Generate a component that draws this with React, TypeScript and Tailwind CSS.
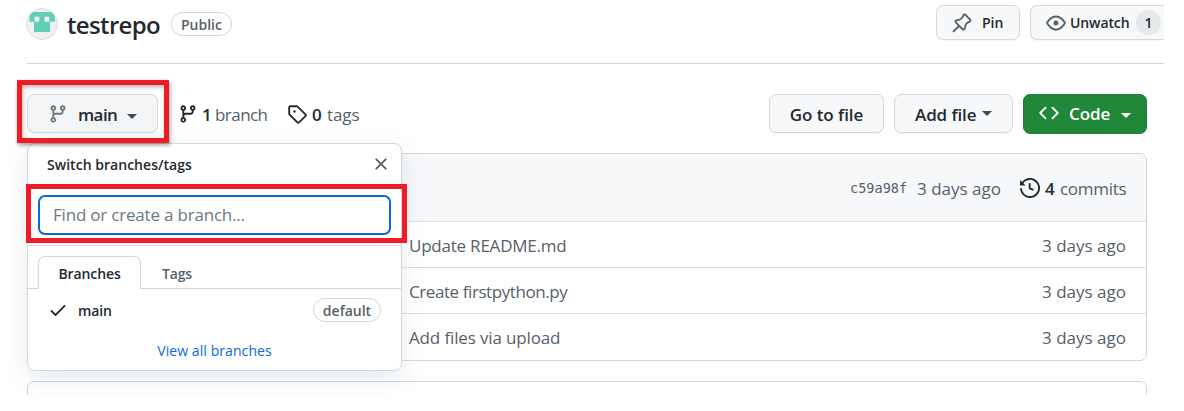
import React from "react";

const paths = {
  branch:
    "M9.5 3.25a2.25 2.25 0 1 1 3 2.122V6A2.5 2.5 0 0 1 10 8.5H6a1 1 0 0 0-1 1v1.128a2.251 2.251 0 1 1-1.5 0V5.372a2.25 2.25 0 1 1 1.5 0v1.836A2.493 2.493 0 0 1 6 7h4a1 1 0 0 0 1-1v-.628A2.25 2.25 0 0 1 9.5 3.25Zm-6 0a.75.75 0 1 0 1.5 0 .75.75 0 0 0-1.5 0Zm8.25-.75a.75.75 0 1 0 0 1.5.75.75 0 0 0 0-1.5ZM4.25 12a.75.75 0 1 0 0 1.5.75.75 0 0 0 0-1.5Z",
  tag: "M1 7.775V2.75C1 1.784 1.784 1 2.75 1h5.025c.464 0 .91.184 1.238.513l6.25 6.25a1.75 1.75 0 0 1 0 2.474l-5.026 5.026a1.75 1.75 0 0 1-2.474 0l-6.25-6.25A1.752 1.752 0 0 1 1 7.775Zm1.5 0c0 .066.026.13.073.177l6.25 6.25a.25.25 0 0 0 .354 0l5.025-5.025a.25.25 0 0 0 0-.354l-6.25-6.25a.25.25 0 0 0-.177-.073H2.75a.25.25 0 0 0-.25.25ZM6 5a1 1 0 1 1 0 2 1 1 0 0 1 0-2Z",
  pin: "m11.294.984 3.722 3.722a1.75 1.75 0 0 1-.504 2.826l-1.327.613a3.089 3.089 0 0 0-1.707 2.084l-.584 2.454c-.317 1.332-1.972 1.8-2.94.832L5.75 11.311 1.78 15.28a.749.749 0 1 1-1.06-1.06l3.969-3.97-2.204-2.204c-.968-.968-.5-2.623.832-2.94l2.454-.584a3.08 3.08 0 0 0 2.084-1.707l.613-1.327a1.75 1.75 0 0 1 2.826-.504ZM6.283 9.723l2.732 2.731a.25.25 0 0 0 .42-.119l.584-2.454a4.586 4.586 0 0 1 2.537-3.098l1.328-.613a.25.25 0 0 0 .072-.404l-3.722-3.722a.25.25 0 0 0-.404.072l-.613 1.328a4.584 4.584 0 0 1-3.098 2.537l-2.454.584a.25.25 0 0 0-.119.42l2.731 2.732Z",
  eye: "M8 2c1.981 0 3.671.992 4.933 2.078 1.27 1.091 2.187 2.345 2.637 3.023a1.62 1.62 0 0 1 0 1.798c-.45.678-1.367 1.932-2.637 3.023C11.67 13.008 9.981 14 8 14c-1.981 0-3.671-.992-4.933-2.078C1.797 10.83.88 9.576.43 8.898a1.62 1.62 0 0 1 0-1.798c.45-.677 1.367-1.931 2.637-3.022C4.33 2.992 6.019 2 8 2ZM1.679 7.932a.12.12 0 0 0 0 .136c.411.622 1.241 1.75 2.366 2.717C5.176 11.758 6.527 12.5 8 12.5c1.473 0 2.825-.742 3.955-1.715 1.124-.967 1.954-2.096 2.366-2.717a.12.12 0 0 0 0-.136c-.412-.621-1.242-1.75-2.366-2.717C10.824 4.242 9.473 3.5 8 3.5c-1.473 0-2.825.742-3.955 1.715-1.124.967-1.954 2.096-2.366 2.717ZM8 10a2 2 0 1 1-.001-3.999A2 2 0 0 1 8 10Z",
  code: "m11.28 3.22 4.25 4.25a.75.75 0 0 1 0 1.06l-4.25 4.25a.749.749 0 0 1-1.275-.326.749.749 0 0 1 .215-.734L13.94 8l-3.72-3.72a.749.749 0 0 1 .326-1.275.749.749 0 0 1 .734.215Zm-6.56 0a.751.751 0 0 1 1.042.018.751.751 0 0 1 .018 1.042L2.06 8l3.72 3.72a.749.749 0 0 1-.326 1.275.749.749 0 0 1-.734-.215L.47 8.53a.75.75 0 0 1 0-1.06Z",
  history:
    "m.427 1.927 1.215 1.215a8.002 8.002 0 1 1-1.6 5.685.75.75 0 1 1 1.493-.154 6.5 6.5 0 1 0 1.18-4.458l1.358 1.358A.25.25 0 0 1 3.896 6H.25A.25.25 0 0 1 0 5.75V2.104a.25.25 0 0 1 .427-.177ZM7.75 4a.75.75 0 0 1 .75.75v2.992l2.028.812a.75.75 0 0 1-.557 1.392l-2.5-1A.751.751 0 0 1 7 8.25v-3.5A.75.75 0 0 1 7.75 4Z",
  x: "M3.72 3.72a.75.75 0 0 1 1.06 0L8 6.94l3.22-3.22a.749.749 0 0 1 1.275.326.749.749 0 0 1-.215.734L9.06 8l3.22 3.22a.749.749 0 0 1-.326 1.275.749.749 0 0 1-.734-.215L8 9.06l-3.22 3.22a.751.751 0 0 1-1.042-.018.751.751 0 0 1-.018-1.042L6.94 8 3.72 4.78a.75.75 0 0 1 0-1.06Z",
  check:
    "M13.78 4.22a.75.75 0 0 1 0 1.06l-7.25 7.25a.75.75 0 0 1-1.06 0L2.22 9.28a.751.751 0 0 1 .018-1.042.751.751 0 0 1 1.042-.018L6 10.94l6.72-6.72a.75.75 0 0 1 1.06 0Z",
};

function Icon({ name, className = "" }: { name: keyof typeof paths; className?: string }) {
  return (
    <svg viewBox="0 0 16 16" fill="currentColor" className={`size-5 shrink-0 ${className}`}>
      <path d={paths[name]} />
    </svg>
  );
}

function Caret({ className = "" }: { className?: string }) {
  return (
    <svg viewBox="0 0 10 5" fill="currentColor" className={`h-[5px] w-[10px] shrink-0 ${className}`}>
      <path d="M0 0h10L5 5z" />
    </svg>
  );
}

function Avatar() {
  return (
    <svg viewBox="0 0 32 32" className="size-8 shrink-0">
      <defs>
        <clipPath id="avatar">
          <circle cx="16" cy="16" r="15" />
        </clipPath>
      </defs>
      <circle cx="16" cy="16" r="15.5" fill="#f0f0f0" stroke="#dcdddf" />
      <g clipPath="url(#avatar)">
        <path
          fill="#5fd0b5"
          d="M3.500 4h25.300v9.800h-4.800v10.200h-16v-10.200h-4.500zM8.500 8.800v5h4.800v-5zM18.500 8.800v5h4.800v-5z"
          fillRule="evenodd"
        />
      </g>
    </svg>
  );
}

const button =
  "flex items-center rounded-[7px] border border-[#d5d8dc] text-[#24292f] shadow-[0_1px_0_rgba(27,31,36,0.04)] font-semibold whitespace-nowrap";

const rows = [
  { message: "Update README.md", tracking: "tracking-[-0.22px]" },
  { message: "Create firstpython.py", tracking: "tracking-[-0.42px]" },
  { message: "Add files via upload", tracking: "tracking-[-0.14px]" },
];

function BranchMenu() {
  return (
    <div className="absolute top-[49px] left-0 z-10 flex h-[228px] w-[375px] flex-col rounded-lg border border-[#d0d7de] bg-white text-[14px] shadow-[0_8px_24px_rgba(140,149,159,0.2)]">
      <div className="flex h-[40px] shrink-0 items-center justify-between pr-[10px] pl-[19px] font-semibold text-[#24292f]">
        <span className="tracking-[0.03px]">Switch branches/tags</span>
        <Icon name="x" className="text-[#57606a]" />
      </div>
      <div className="relative z-10 -ml-[2px] h-[59px] w-[381px] shrink-0 border-[5px] border-[#ee1c25] py-[6px] pl-[7px]">
        <div className="flex h-[40px] w-[353px] items-center rounded-[7px] border-2 border-[#0969da] bg-white pl-[13px] text-[17px] tracking-[-0.2px] text-[#6e7781]">
          Find or create a branch...
        </div>
      </div>
      <div className="mt-[2px] flex h-[44px] shrink-0 items-end border-y border-[#d0d7de] pl-[10px] font-semibold">
        <div className="-mb-px flex h-[33px] w-[103px] items-center justify-center rounded-t-[7px] border border-b-0 border-[#d0d7de] bg-white text-[#24292f]">
          <span className="tracking-[-0.1px]">Branches</span>
        </div>
        <div className="flex h-[32px] items-center pt-[2px] pl-[21px] tracking-[-0.2px] text-[#57606a]">Tags</div>
      </div>
      <div className="flex h-[42px] shrink-0 items-center pr-[20px] pl-[20px] font-semibold text-[#24292f]">
        <Icon name="check" />
        <span className="ml-[10px] grow tracking-[-0.15px]">main</span>
        <span className="flex h-6 w-[68px] items-center justify-center rounded-full border border-[#d0d7de] text-[14px] text-[#57606a]">
          default
        </span>
      </div>
      <div className="flex h-[38px] items-center justify-center text-[14px] tracking-[0.08px] text-[#0969da]">
        View all branches
      </div>
    </div>
  );
}

export default function App() {
  return (
    <div className="h-[411px] w-[1184px] overflow-hidden bg-white font-['Open_Sans','Noto_Sans',sans-serif] text-[17px] text-[#57606a]">
      <div className="flex h-[395px] w-[1164px] flex-col overflow-hidden">
        <header className="ml-[27px] flex h-[64px] w-[1137px] shrink-0 border-b border-[#d0d7de]">
          <div className="mt-2 -ml-px flex h-8 shrink-0 items-center">
            <Avatar />
            <h1 className="ml-[9px] w-[104px] pt-[2px] text-[24px] font-semibold tracking-[-0.65px] text-[#24292f]">
              testrepo
            </h1>
            <span className="flex h-6 w-[61px] items-center justify-center rounded-full border border-[#d0d7de] text-[14px] font-semibold">
              Public
            </span>
          </div>
          <div className="mt-[5px] ml-auto flex h-[35px] shrink-0 gap-[10px] text-[14px]">
            <button className={`${button} w-[84px] bg-[#f6f8fa] pl-[15px]`}>
              <Icon name="pin" className="text-[#57606a]" />
              <span className="ml-[10px]">Pin</span>
            </button>
            <button className={`${button} w-[134px] rounded-r-none border-r-0 bg-[#f6f8fa] pl-[15px]`}>
              <Icon name="eye" className="text-[#57606a]" />
              <span className="ml-[4px] w-[66px] text-left tracking-[-0.1px]">Unwatch</span>
              <span className="flex size-[25px] shrink-0 items-center justify-center rounded-full bg-[#e6e9ea]">1</span>
            </button>
          </div>
        </header>
        <main className="relative mt-[30px] ml-[27px] flex w-[1120px] shrink-0 flex-col">
          <div className="flex h-10 items-start">
            <div className="relative">
              <button className={`${button} h-[39px] w-[131px] bg-[#f3f4f6] pl-[20px]`}>
                <Icon name="branch" className="text-[#6e7781]" />
                <span className="ml-[10px] w-[49px] pt-[2px] text-left tracking-[-0.6px]">main</span>
                <Caret className="mt-[5px] text-[#424a53]" />
              </button>
              <div className="absolute -top-[14px] -left-[10px] z-20 h-[63px] w-[152px] border-[5px] border-[#ee1c25] shadow-[1px_2px_4px_rgba(0,0,0,0.4),inset_1px_2px_4px_rgba(0,0,0,0.3)]" />
            </div>
            <div className="ml-[20px] flex h-[39px] items-center whitespace-nowrap">
              <Icon name="branch" className="text-[#24292f]" />
              <b className="ml-[4px] w-[13px] pt-[2px] font-semibold text-[#24292f]">1</b>
              <span className="w-[72px] pt-[2px] tracking-[-0.55px]">branch</span>
              <Icon name="tag" className="text-[#24292f]" />
              <b className="ml-[5px] w-[15px] pt-[2px] font-semibold text-[#24292f]">0</b>
              <span className="pt-[2px] tracking-[-0.1px]">tags</span>
            </div>
            <div className="ml-auto flex gap-[10px]">
              <button className={`${button} h-[39px] w-[115px] justify-center bg-[#f6f8fa] pt-[2px] tracking-[-0.05px]`}>
                Go to file
              </button>
              <button className={`${button} h-[39px] w-[119px] bg-[#f6f8fa] pl-[20px]`}>
                <span className="w-[67px] pt-[2px] text-left tracking-[-0.1px]">Add file</span>
                <Caret className="text-[#424a53]" />
              </button>
              <button className="flex h-10 w-[124px] items-center rounded-[7px] border border-[#1f7f3a] bg-[#218739] pl-[15px] font-semibold text-white">
                <Icon name="code" className="-mt-[2px]" />
                <span className="ml-[10px] w-[52px] text-left tracking-[-0.05px]">Code</span>
                <Caret className="mt-[2px]" />
              </button>
            </div>
          </div>
          <section className="mt-[19px] h-[208px] overflow-hidden rounded-[7px] border border-[#d0d7de]">
            <div className="flex h-[67px] items-center justify-end bg-[#f6f8fa] pr-5 whitespace-nowrap">
              <span className="mr-[10px] w-[57px] pt-[2px] font-['DejaVu_Sans_Mono',monospace] text-[13.500px] tracking-[0.03px]">
                c59a98f
              </span>
              <span className="mr-[20px] w-[83px] pt-[2px]">3 days ago</span>
              <Icon name="history" className="text-[#24292f]" />
              <b className="ml-[5px] w-[15px] pt-[2px] font-semibold text-[#24292f]">4</b>
              <span className="w-[66px] pt-[2px] tracking-[-0.3px]">commits</span>
            </div>
            {rows.map((r) => (
              <div
                key={r.message}
                className="flex h-[46px] items-center justify-between border-t border-[#d8dee4] pt-[3px] pr-5 pl-[381px]"
              >
                <span className={r.tracking}>{r.message}</span>
                <span className="w-[84px]">3 days ago</span>
              </div>
            ))}
          </section>
          <BranchMenu />
          <section className="mt-5 h-[40px] rounded-[7px] border border-[#d0d7de]" />
        </main>
      </div>
    </div>
  );
}
